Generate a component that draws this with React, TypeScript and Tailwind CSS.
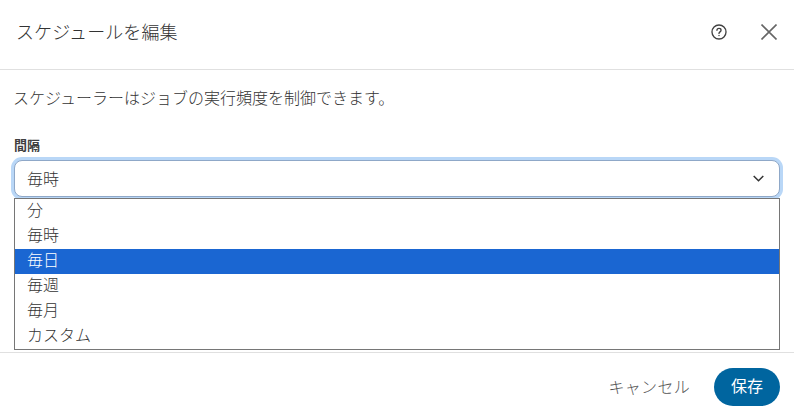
const font = "font-['Noto_Sans_CJK_JP','Liberation_Sans',sans-serif]";

const options = ['分', '毎時', '毎日', '毎週', '毎月', 'カスタム'];

function HelpIcon() {
  return (
    <svg width="16" height="16" viewBox="0 0 18 18" fill="none" stroke="#404040" strokeWidth="1.5">
      <circle cx="9" cy="9" r="7.9" />
      <path d="M6.7 7.1c0-1.3 1-2.1 2.3-2.1s2.3.8 2.3 2c0 1.9-2.3 1.8-2.3 3.6" strokeLinecap="round" />
      <circle cx="9" cy="13" r="0.5" fill="#404040" strokeWidth="0.6" />
    </svg>
  );
}

function CloseIcon() {
  return (
    <svg width="16" height="16" viewBox="0 0 16 16" fill="none" stroke="#666666" strokeWidth="1.6">
      <path d="M0.5 0.5l15 15M15.5 0.5l-15 15" />
    </svg>
  );
}

export default function App() {
  return (
    <div className={`w-[794px] h-[416px] bg-white flex flex-col overflow-hidden text-[#404040] ${font}`}>
      {/* Header */}
      <div className="h-[70px] shrink-0 border-b border-[#e0e0e0] flex items-center justify-between pl-4 pr-[17px] pb-[8px]">
        <h2 className="text-[18px] leading-[24px] font-light tracking-[0.1px] text-[#333333]">スケジュールを編集</h2>
        <div className="flex items-center gap-[34px] pt-[3px]">
          <HelpIcon />
          <CloseIcon />
        </div>
      </div>

      {/* Body */}
      <div className="h-[282px] shrink-0 px-[14px] flex flex-col">
        <p className="mt-[15px] -ml-px text-[16px] leading-[24px] font-light text-[#333333]">
          スケジューラーはジョブの実行頻度を制御できます。
        </p>
        <label className="mt-[28px] text-[13px] leading-[16px] font-bold text-[#404040]">間隔</label>
        <div className="mt-[7px] h-[37px] shrink-0 rounded-[8px] border border-[#8fa8c8] ring-[3px] ring-[#b9d7f7] bg-white flex items-center justify-between pl-[12px] pr-[15px]">
          <span className="text-[16px] leading-[22px] pb-px font-light text-[#333333]">毎時</span>
          <svg width="11" height="7" viewBox="0 0 11 7" fill="none" stroke="#333333" strokeWidth="1.5">
            <path d="M0.7 1l4.8 4.8L10.3 1" />
          </svg>
        </div>
        <ul className="mt-px w-full border border-[#767676] bg-white flex flex-col">
          {options.map(option => (
            <li
              key={option}
              className={`h-[25px] pl-[12px] text-[16px] leading-[21px] font-light ${
                option === '毎日' ? 'bg-[#1a66d2] text-white' : 'text-[#333333]'
              }`}
            >
              {option}
            </li>
          ))}
        </ul>
      </div>

      {/* Footer */}
      <div className="flex-1 border-t border-[#e0e0e0] flex items-center justify-end gap-[24px] pr-[14px] pt-[5px]">
        <span className="text-[16px] leading-[20px] pb-[3px] font-light tracking-[0.3px] text-[#555555]">キャンセル</span>
        <button className="w-[66px] h-[38px] pb-[4px] rounded-full bg-[#00659f] text-white text-[16px]">保存</button>
      </div>
    </div>
  );
}
